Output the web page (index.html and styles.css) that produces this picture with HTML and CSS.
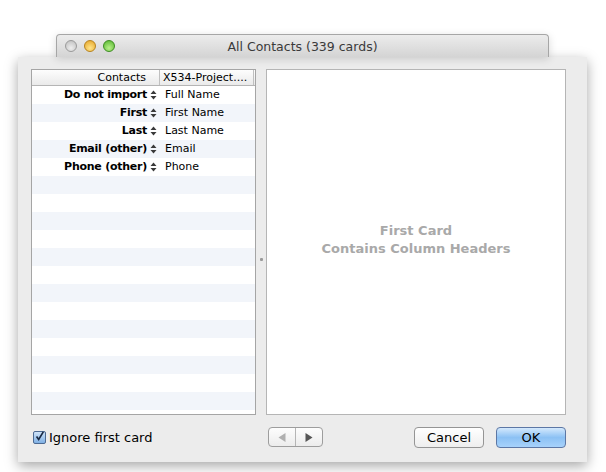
FILE: index.html
```html
<!DOCTYPE html>
<html>
<head>
<meta charset="utf-8">
<link rel="stylesheet" href="styles.css">
</head>
<body>
<div class="scene">
  <div class="titlebar">
    <div class="lights">
      <span class="light gray"></span>
      <span class="light yellow"></span>
      <span class="light green"></span>
    </div>
    <div class="title">All Contacts (339 cards)</div>
  </div>
  <div class="sheet">
    <div class="panes">
      <div class="table">
        <div class="thead">
          <div class="c1">Contacts</div>
          <div class="c2">X534-Project....</div>
        </div>
        <div class="tbody">
          <div class="row"><div class="c1"><b>Do not import</b><svg class="stepper" width="7" height="10" viewBox="0 0 7 10"><path d="M3.5 0.5 L6.5 4 L0.5 4 Z M0.5 6 L6.5 6 L3.5 9.5 Z" fill="#3a3a3a"/></svg></div><div class="c2">Full Name</div></div>
          <div class="row"><div class="c1"><b>First</b><svg class="stepper" width="7" height="10" viewBox="0 0 7 10"><path d="M3.5 0.5 L6.5 4 L0.5 4 Z M0.5 6 L6.5 6 L3.5 9.5 Z" fill="#3a3a3a"/></svg></div><div class="c2">First Name</div></div>
          <div class="row"><div class="c1"><b>Last</b><svg class="stepper" width="7" height="10" viewBox="0 0 7 10"><path d="M3.5 0.5 L6.5 4 L0.5 4 Z M0.5 6 L6.5 6 L3.5 9.5 Z" fill="#3a3a3a"/></svg></div><div class="c2">Last Name</div></div>
          <div class="row"><div class="c1"><b>Email (other)</b><svg class="stepper" width="7" height="10" viewBox="0 0 7 10"><path d="M3.5 0.5 L6.5 4 L0.5 4 Z M0.5 6 L6.5 6 L3.5 9.5 Z" fill="#3a3a3a"/></svg></div><div class="c2">Email</div></div>
          <div class="row"><div class="c1"><b>Phone (other)</b><svg class="stepper" width="7" height="10" viewBox="0 0 7 10"><path d="M3.5 0.5 L6.5 4 L0.5 4 Z M0.5 6 L6.5 6 L3.5 9.5 Z" fill="#3a3a3a"/></svg></div><div class="c2">Phone</div></div>
          <div class="row"></div><div class="row"></div><div class="row"></div><div class="row"></div>
          <div class="row"></div><div class="row"></div><div class="row"></div><div class="row"></div>
          <div class="row"></div><div class="row"></div><div class="row"></div><div class="row"></div>
          <div class="row"></div><div class="row"></div>
        </div>
      </div>
      <div class="splitter"><span class="grip"></span></div>
      <div class="card">
        <div class="cardtext">First Card<br>Contains Column Headers</div>
      </div>
    </div>
    <div class="footer">
      <label class="check"><span class="box"><svg width="13" height="13" viewBox="0 0 13 13"><path d="M3 6.5 L5.5 10 L11 1" fill="none" stroke="#1a2a44" stroke-width="2"/></svg></span>Ignore first card</label>
      <div class="seg">
        <span class="segbtn dim"><svg width="8" height="9" viewBox="0 0 8 9"><path d="M7.5 0 L7.5 9 L0.5 4.5 Z" fill="#b0b0b0"/></svg></span>
        <span class="segbtn"><svg width="8" height="9" viewBox="0 0 8 9"><path d="M0.5 0 L0.5 9 L7.5 4.5 Z" fill="#555"/></svg></span>
      </div>
      <div class="spacer"></div>
      <button class="btn">Cancel</button>
      <button class="btn ok">OK</button>
    </div>
  </div>
</div>
</body>
</html>
```

FILE: styles.css
```css
html, body { margin: 0; padding: 0; background: #fff; }
body { font-family: "Lucida Grande", "DejaVu Sans", sans-serif; color: #000; }
.scene { padding-top: 34px; width: 606px; height: 472px; box-sizing: border-box; overflow: hidden; }
.titlebar {
  margin-left: 56px; width: 493px; height: 23px; box-sizing: border-box;
  border: 1px solid #a6a6a6; border-bottom: none; border-radius: 4px 4px 0 0;
  background: linear-gradient(#ececec, #d4d4d4);
  display: flex; align-items: center; position: relative;
  box-shadow: 0 2px 8px rgba(0,0,0,0.15);
}
.lights { display: flex; gap: 7px; padding-left: 8px; }
.light { width: 12px; height: 12px; border-radius: 50%; box-sizing: border-box; border: 1px solid #8a8a8a; }
.light.gray { background: radial-gradient(circle at 50% 70%, #eee, #bcbcbc); border-color: #9a9a9a; }
.light.yellow { background: radial-gradient(circle at 50% 70%, #ffe48a, #e5a324); border-color: #b6821e; }
.light.green { background: radial-gradient(circle at 50% 70%, #b8f08a, #54b52c); border-color: #3d8c22; }
.title { position: absolute; left: 0; right: 0; text-align: center; font-size: 12.5px; color: #3a3a3a; pointer-events: none; top: 4px; }
.sheet {
  margin-left: 18px; width: 569px; height: 405px; box-sizing: border-box;
  background: #ececec; padding: 12px 21px 0 13px;
  box-shadow: 0 4px 12px rgba(0,0,0,0.35);
  display: flex; flex-direction: column;
}
.panes { display: flex; height: 346px; }
.table { width: 225px; box-sizing: border-box; border: 1px solid #a5a5a5; background: #fff; display: flex; flex-direction: column; overflow: hidden; }
.thead { display: flex; height: 15px; border-bottom: 1px solid #b5b5b5; background: linear-gradient(#fdfdfd, #eaeaea); font-size: 11px; line-height: 15px; }
.thead .c1 { width: 128px; text-align: right; padding-right: 13px; box-sizing: border-box; border-right: 1px solid #c0c0c0; }
.thead .c2 { flex: 1; padding-left: 3px; border-right: 1px solid #c0c0c0; margin-right: 1px; }
.tbody { flex: 1; }
.row { height: 18px; display: flex; font-size: 11px; line-height: 18px; }
.row:nth-child(even) { background: #f2f5fa; }
.row .c1 { width: 128px; box-sizing: border-box; padding-right: 3px; display: flex; justify-content: flex-end; align-items: flex-start; gap: 3px; }
.row .c1 b { font-weight: bold; font-size: 11px; line-height: 18px; letter-spacing: -0.25px; }
.row .c2 { padding-left: 5px; }
.stepper { display: block; margin-top: 4px; }
.splitter { width: 10px; display: flex; align-items: center; justify-content: center; }
.grip { width: 3px; height: 3px; background: #9a9a9a; border-radius: 1px; margin-top: 34px; }
.card { width: 300px; box-sizing: border-box; border: 1px solid #b5b5b5; background: #fff; display: flex; align-items: center; justify-content: center; }
.cardtext { text-align: center; font-weight: bold; font-size: 13px; line-height: 18px; color: #a9a9a9; margin-top: -4px; }
.footer { flex: 1; display: flex; align-items: center; padding-bottom: 3px; }
.check { display: flex; align-items: center; font-size: 13px; margin-left: 2px; gap: 3px; width: 235px; }
.box { width: 13px; height: 13px; box-sizing: border-box; border: 1px solid #4d6a92; border-radius: 2px; background: linear-gradient(#cfe3f8, #7fb0e4); display: flex; overflow: visible; }
.box svg { margin-top: -2px; }
.seg { display: flex; border: 1px solid #9d9d9d; border-radius: 4px; height: 20px; box-sizing: border-box; background: linear-gradient(#fdfdfd, #ececec); }
.segbtn { width: 26px; display: flex; align-items: center; justify-content: center; }
.segbtn.dim { border-right: 1px solid #b5b5b5; }
.spacer { flex: 1; }
.btn { font-family: inherit; font-size: 13px; height: 21px; width: 70px; border: 1px solid #959595; border-radius: 4px; background: linear-gradient(#ffffff, #eeeeee); padding: 0; margin-left: 12px; color: #000; }
.btn.ok { background: linear-gradient(#d4e9fd, #8cc1f4 50%, #a7d2fb); border-color: #5c77a5; }
```
